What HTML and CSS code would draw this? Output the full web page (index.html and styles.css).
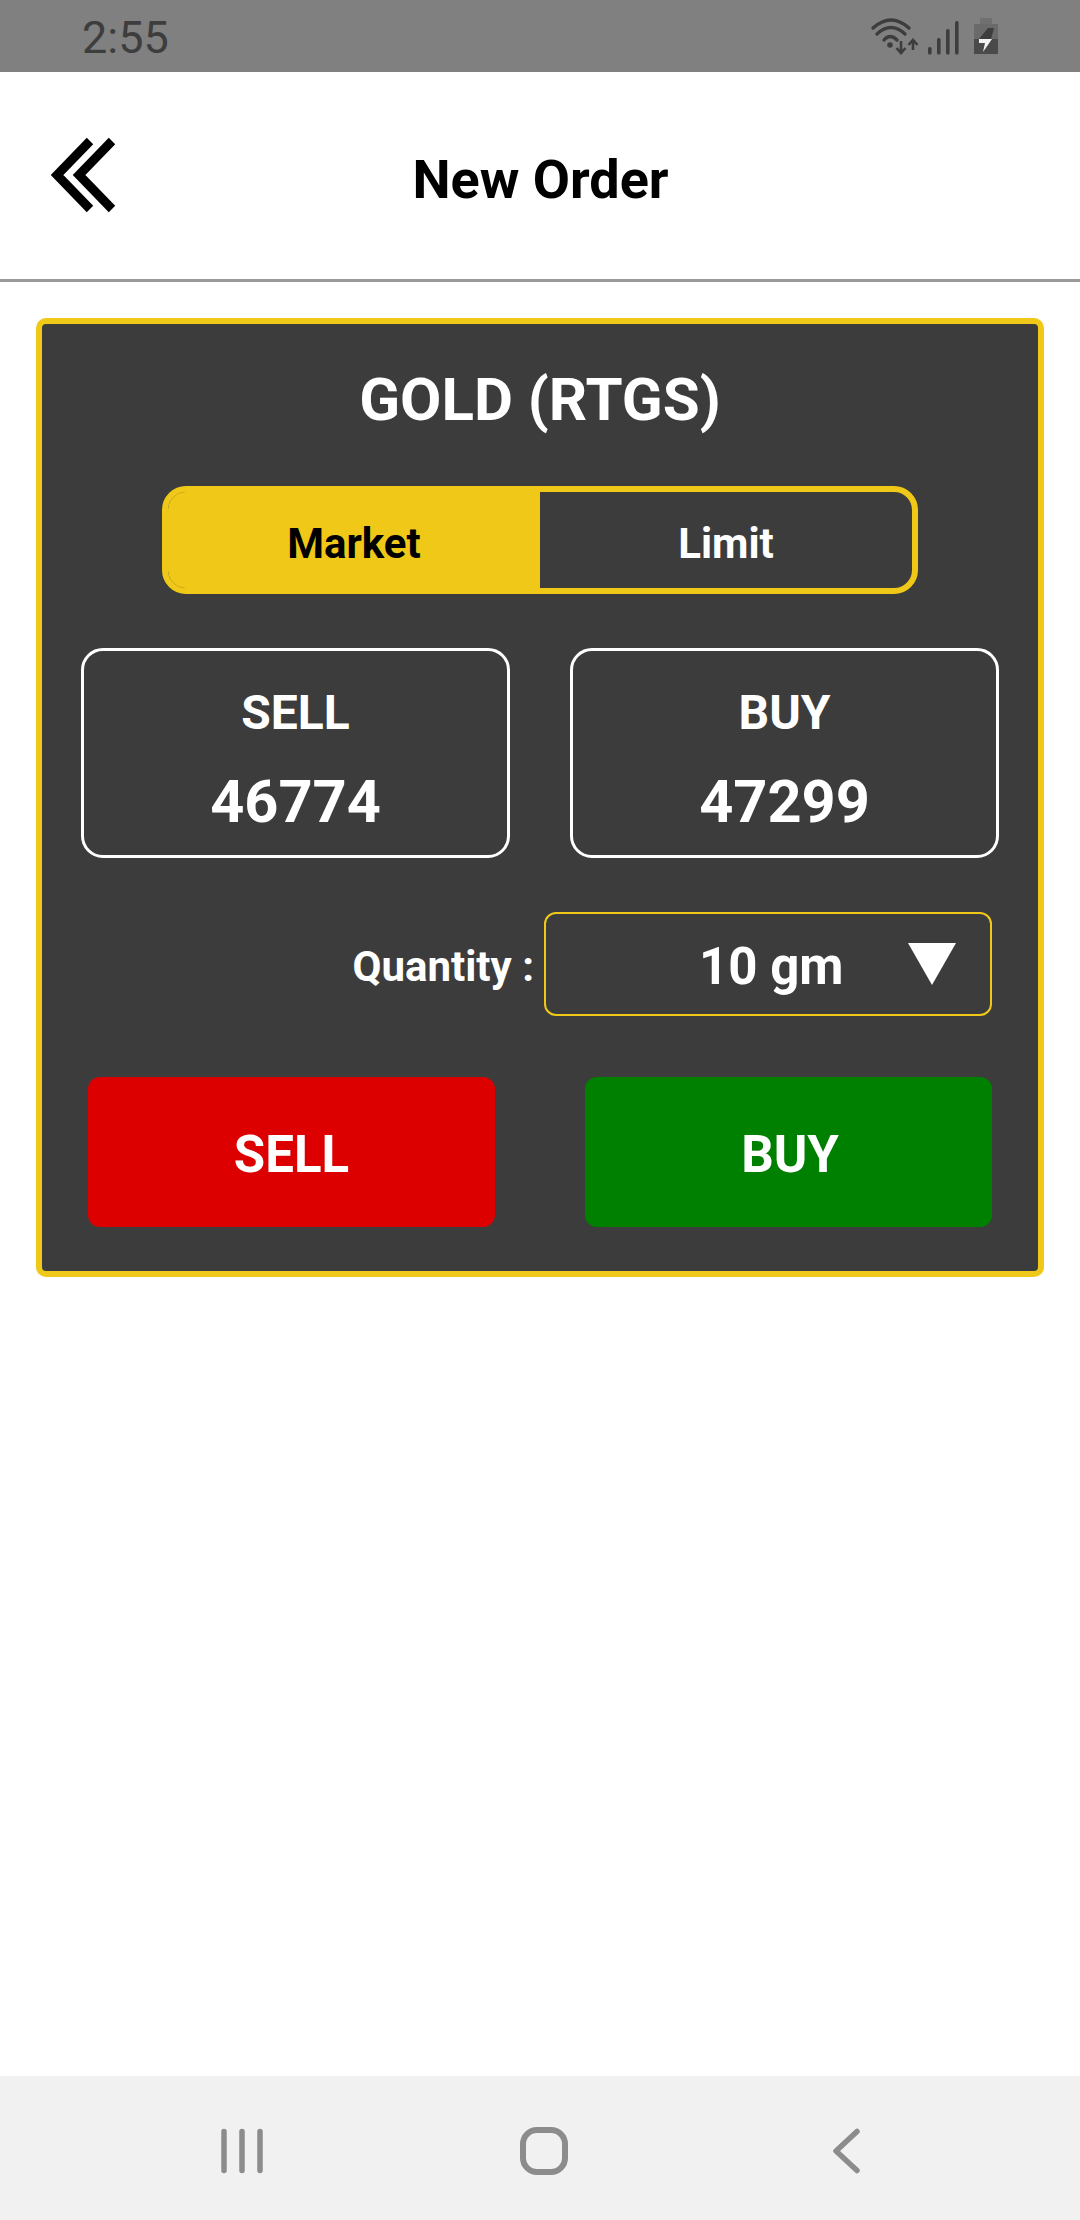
FILE: index.html
```html
<!DOCTYPE html>
<html lang="en">
<head>
  <meta charset="UTF-8">
  <meta name="viewport" content="width=device-width, initial-scale=1.0">
  <title>New Order</title>
  <link rel="stylesheet" href="styles.css">
</head>
<body>
  <div class="page">
    <div class="status-bar">
      <span class="time">2:55</span>
      <svg class="status-icons" width="150" height="72" viewBox="0 0 150 72">
        <g fill="none" stroke="#3d3d3d" stroke-width="3.4" stroke-linecap="round">
          <path d="M13 28 Q31 12 49 28"/>
          <path d="M17 34 Q31 21 45 34"/>
          <path d="M24 40 Q30 33 37 40"/>
        </g>
        <circle cx="30" cy="45" r="2.8" fill="#3d3d3d"/>
        <g fill="none" stroke="#3d3d3d" stroke-width="2.600">
          <path d="M41 41 V53 M36.500 48 L41 53 L45.500 48"/>
          <path d="M53 50 V40 M48.500 45 L53 40 L57.500 45"/>
        </g>
        <g fill="#3d3d3d">
          <rect x="68" y="47" width="3.600" height="7.500" rx="1.500"/>
          <rect x="77" y="38" width="3.600" height="16.500" rx="1.500"/>
          <rect x="86" y="29" width="3.600" height="25.500" rx="1.500"/>
          <rect x="95" y="21" width="3.600" height="33.500" rx="1.500"/>
        </g>
        <rect x="120" y="18" width="12" height="6" fill="#707070"/>
        <rect x="114" y="24" width="24" height="15" fill="#6a6a6a"/>
        <rect x="114" y="39" width="24" height="15" fill="#4a4a4a"/>
        <path d="M128 28 L119 39 H131 L134 28 Z" fill="#3d3d3d"/>
        <path d="M119 39 H132 L123 52 L125 43 H119 Z" fill="#f2f2f2"/>
      </svg>
    </div>

    <div class="header">
      <svg class="back-icon" width="70" height="80" viewBox="0 0 70 80">
        <path d="M39 4 L6 38 L39 72 M61 4 L28 38 L61 72" fill="none" stroke="#000" stroke-width="9"/>
      </svg>
      <h1 class="header-title">New Order</h1>
    </div>

    <div class="main">
      <div class="order-card">
        <h2 class="card-title">GOLD (RTGS)</h2>

        <div class="order-type">
          <button class="type-btn active">Market</button>
          <button class="type-btn">Limit</button>
        </div>

        <div class="rates">
          <div class="rate-box">
            <span class="rate-label">SELL</span>
            <span class="rate-value">46774</span>
          </div>
          <div class="rate-box">
            <span class="rate-label">BUY</span>
            <span class="rate-value">47299</span>
          </div>
        </div>

        <div class="quantity-row">
          <label class="quantity-label">Quantity :</label>
          <div class="quantity-select">
            <span class="quantity-value">10 gm</span>
            <svg class="caret" width="48" height="42" viewBox="0 0 48 42">
              <polygon points="0,0 48,0 24,42" fill="#fff"/>
            </svg>
          </div>
        </div>

        <div class="actions">
          <button class="action-btn sell">SELL</button>
          <button class="action-btn buy">BUY</button>
        </div>
      </div>
    </div>

    <div class="nav-bar">
      <svg class="nav-icon" width="48" height="48" viewBox="0 0 48 48">
        <path d="M6 4.500 V43.500 M24 4.500 V43.500 M42 4.500 V43.500" fill="none" stroke="#8c8c8c" stroke-width="5.500" stroke-linecap="round"/>
      </svg>
      <svg class="nav-icon" width="48" height="48" viewBox="0 0 48 48">
        <rect x="3" y="3" width="42" height="42" rx="14" fill="none" stroke="#8c8c8c" stroke-width="6"/>
      </svg>
      <svg class="nav-icon" width="48" height="48" viewBox="0 0 48 48">
        <path d="M35 4.500 L14 24 L35 43.500" fill="none" stroke="#8c8c8c" stroke-width="5.500" stroke-linecap="round" stroke-linejoin="round"/>
      </svg>
    </div>
  </div>
</body>
</html>
```

FILE: styles.css
```css
* { box-sizing: border-box; }
body { margin: 0; padding: 0; background: #fff; font-family: Roboto, "Liberation Sans", sans-serif; }
h1, h2 { margin: 0; }
.page { width: 1080px; height: 2220px; display: flex; flex-direction: column; }

.status-bar { height: 72px; flex: none; background: #808080; display: flex; justify-content: space-between; padding: 0 70px 0 82px; color: #3d3d3d; }
.time { font-size: 45px; line-height: 76px; font-weight: 400; }
.status-icons { display: block; }

.header { height: 210px; flex: none; border-bottom: 3px solid #999; display: flex; align-items: center; justify-content: center; padding: 8px 0 0 1px; position: relative; }
.back-icon { position: absolute; left: 51px; top: 65px; }
.header-title { font-size: 54px; font-weight: 700; color: #000; }

.main { flex: 1; padding: 36px; }
.order-card { height: 959px; background: #3c3c3c; border: 6px solid #f0c818; border-radius: 10px; display: flex; flex-direction: column; align-items: center; }
.card-title { margin-top: 40px; font-size: 60px; line-height: 72px; font-weight: 700; color: #fff; }

.order-type { margin-top: 50px; width: 756px; height: 108px; display: flex; border: 6px solid #f0c818; border-radius: 24px; overflow: hidden; }
.type-btn { flex: 1; border: none; background: transparent; padding: 6px 0 0; color: #fff; font-family: inherit; font-size: 42px; font-weight: 700; }
.type-btn.active { background: #f0c818; color: #000; }

.rates { margin-top: 54px; width: 100%; padding: 0 39px; display: flex; justify-content: space-between; }
.rate-box { width: 429px; height: 210px; border: 3px solid #fff; border-radius: 22px; display: flex; flex-direction: column; align-items: center; padding-top: 34px; color: #fff; font-weight: 700; }
.rate-label { font-size: 48px; line-height: 56px; }
.rate-value { font-size: 59.5px; line-height: 70px; margin-top: 26px; }

.quantity-row { margin-top: 54px; width: 100%; padding: 0 46px 0 0; display: flex; justify-content: flex-end; align-items: center; }
.quantity-label { font-size: 42px; font-weight: 700; color: #fff; margin-right: 10px; padding-top: 5px; }
.quantity-select { width: 448px; height: 104px; border: 2px solid #f0c818; border-radius: 12px; display: flex; align-items: center; padding: 0 34px 0 153px; color: #fff; }
.quantity-value { font-size: 51px; font-weight: 700; flex: 1; padding-top: 5px; }
.caret { display: block; }

.actions { margin-top: 61px; width: 100%; padding: 0 46px; display: flex; justify-content: space-between; }
.action-btn { width: 407px; height: 150px; border: none; border-radius: 12px; padding: 5px 0 0; color: #fff; font-family: inherit; font-size: 51px; font-weight: 700; }
.action-btn.sell { background: #dc0000; }
.action-btn.buy { background: #008000; padding-left: 3px; }

.nav-bar { height: 144px; flex: none; background: #f1f1f1; display: flex; align-items: center; gap: 254px; padding: 5px 0 0 218px; }
.nav-icon { display: block; flex: none; }
```
